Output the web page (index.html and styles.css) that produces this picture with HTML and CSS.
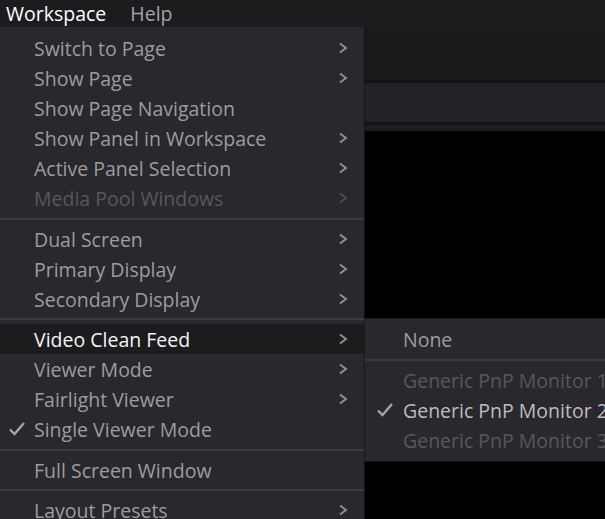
FILE: index.html
```html
<!DOCTYPE html>
<html lang="en">
<head>
    <meta charset="UTF-8">
    <meta name="viewport" content="width=device-width, initial-scale=1.0">
    <title>Workspace Menu</title>
    <link rel="stylesheet" href="styles.css">
</head>
<body>
    <div class="app">
        <!-- Menu bar -->
        <div class="menubar">
            <span class="menubar-item active">Workspace</span>
            <span class="menubar-item">Help</span>
        </div>

        <!-- Background workspace -->
        <div class="workspace">
            <div class="toolbar-area"></div>
            <div class="panel-strip"></div>
            <div class="viewer"></div>
        </div>

        <!-- Workspace dropdown -->
        <div class="menu main-menu">
            <div class="item sub">Switch to Page</div>
            <div class="item sub">Show Page</div>
            <div class="item">Show Page Navigation</div>
            <div class="item sub">Show Panel in Workspace</div>
            <div class="item sub">Active Panel Selection</div>
            <div class="item sub disabled">Media Pool Windows</div>
            <div class="separator wide"></div>
            <div class="item sub">Dual Screen</div>
            <div class="item sub">Primary Display</div>
            <div class="item sub">Secondary Display</div>
            <div class="separator"></div>
            <div class="item sub hover">Video Clean Feed</div>
            <div class="item sub">Viewer Mode</div>
            <div class="item sub">Fairlight Viewer</div>
            <div class="item checked">Single Viewer Mode</div>
            <div class="separator wide"></div>
            <div class="item">Full Screen Window</div>
            <div class="separator"></div>
            <div class="item sub">Layout Presets</div>
        </div>

        <!-- Video Clean Feed submenu -->
        <div class="menu sub-menu">
            <div class="item">None</div>
            <div class="separator wide"></div>
            <div class="item disabled">Generic PnP Monitor 1</div>
            <div class="item checked bright">Generic PnP Monitor 2</div>
            <div class="item disabled">Generic PnP Monitor 3</div>
        </div>
    </div>

    <script>
        // Add the chevron and check mark icons to menu items
        const chevron = '<svg class="chevron" width="10" height="12" viewBox="0 0 10 12"><polyline points="2,1.5 8,6 2,10.5" fill="none" stroke="currentColor" stroke-width="2"/></svg>';
        const check = '<svg class="check" width="18" height="16" viewBox="0 0 18 16"><polyline points="2,8.5 6.5,13 16,2" fill="none" stroke="currentColor" stroke-width="2.4"/></svg>';

        document.querySelectorAll('.item').forEach(function (item) {
            const label = item.textContent;
            item.innerHTML = '<span class="mark"></span><span class="label"></span><span class="arrow"></span>';
            item.querySelector('.label').textContent = label;
            if (item.classList.contains('checked')) {
                item.querySelector('.mark').innerHTML = check;
            }
            if (item.classList.contains('sub')) {
                item.querySelector('.arrow').innerHTML = chevron;
            }
        });
    </script>
</body>
</html>
```

FILE: styles.css
```css
/* Reset and base styles */
* {
    margin: 0;
    padding: 0;
    box-sizing: border-box;
}

body {
    font-family: "Open Sans", "Noto Sans", sans-serif;
    background-color: #000;
    width: 605px;
    height: 519px;
    overflow: hidden;
}

.app {
    position: relative;
    width: 605px;
    height: 519px;
    display: flex;
    flex-direction: column;
}

/* Menu bar */
.menubar {
    height: 27px;
    background-color: #1c1c1f;
    display: flex;
    align-items: center;
    gap: 24px;
    padding-left: 6px;
    flex-shrink: 0;
}

.menubar-item {
    font-size: 19.5px;
    color: #a3a3a5;
    line-height: 25px;
}

.menubar-item.active {
    color: #fff;
}

/* Workspace behind the menus */
.workspace {
    flex: 1;
    display: flex;
    flex-direction: column;
}

.toolbar-area {
    height: 53px;
    background-color: #1a1b1d;
}

.panel-strip {
    height: 51px;
    background-color: #232327;
    border-top: 3px solid #141416;
    border-bottom: 6px solid #1d1d1f;
    box-shadow: inset 0 -3px 0 #141414;
}

.viewer {
    flex: 1;
    background-color: #000;
}

/* Dropdown menus */
.menu {
    position: absolute;
    background-color: #28282d;
    box-shadow: 1px 1px 0 #131315;
}

.main-menu {
    left: 0;
    top: 27px;
    width: 364px;
    padding-top: 6px;
    bottom: -20px;
}

.sub-menu {
    left: 364px;
    top: 318px;
    width: 260px;
    padding: 5px 0 6px;
    border-left: 1px solid #1a1a1c;
    border-top: 1px solid #1a1a1c;
}

.item {
    height: 30px;
    display: flex;
    align-items: center;
    font-size: 19.5px;
    color: #9d9d9f;
    white-space: nowrap;
}

.item .mark {
    width: 34px;
    flex-shrink: 0;
    display: flex;
    justify-content: center;
    color: #a5a5a7;
}

.sub-menu .item .mark {
    width: 38px;
    padding-left: 2px;
}

.item .label {
    flex: 1;
}

.item .arrow {
    width: 26px;
    display: flex;
    align-items: center;
    color: #8f8f91;
}

.item .chevron {
    display: block;
}

.item.hover {
    background-color: #1c1c1f;
    color: #f4f4f4;
}

.item.disabled {
    color: #58585c;
}

.item.disabled .arrow {
    color: #4c4c50;
}

.item.bright {
    color: #bdbdbf;
}

.separator {
    height: 10px;
    display: flex;
    align-items: center;
}

.separator.wide {
    height: 11px;
}

.separator::after {
    content: "";
    display: block;
    width: 100%;
    height: 2px;
    background-color: #3a3a3f;
}
```
